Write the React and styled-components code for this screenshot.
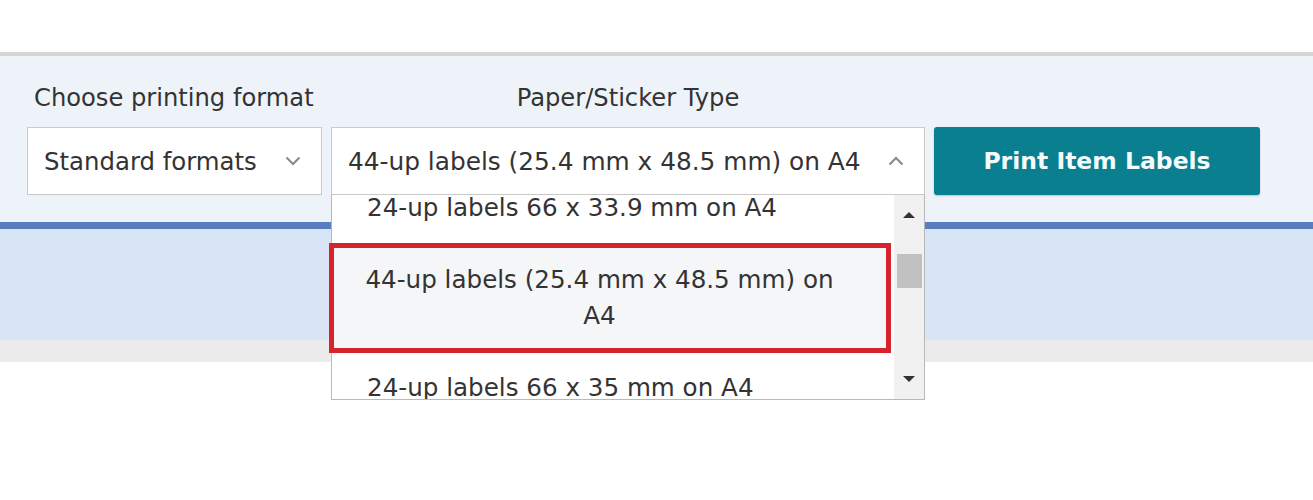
import React from "react";
import styled, { createGlobalStyle } from "styled-components";

const GlobalStyle = createGlobalStyle`
  body {
    margin: 0;
    background: #fff;
    font-family: "DejaVu Sans", Verdana, sans-serif;
    color: #333;
  }
`;

const options = [
  { id: 1, text: "24-up labels 66 x 33.9 mm on A4" },
  { id: 2, text: "44-up labels (25.4 mm x 48.5 mm) on A4", selected: true },
  { id: 3, text: "24-up labels 66 x 35 mm on A4" },
];

function Chevron({ up }) {
  return (
    <svg width="16" height="10" viewBox="0 0 16 10">
      <path
        d={up ? "M1.5 8.5 L8 2 L14.5 8.5" : "M1.5 1.5 L8 8 L14.5 1.5"}
        fill="none"
        stroke="#888"
        strokeWidth="2"
      />
    </svg>
  );
}

export default function App() {
  return (
    <>
      <GlobalStyle />
      <Page>
        <Toolbar>
          <Form>
            <Label>Choose printing format</Label>
            <Label $center>Paper/Sticker Type</Label>
            <Select>
              <span>Standard formats</span>
              <Chevron />
            </Select>
            <SelectWrap>
              <Select $wide>
                <span>44-up labels (25.4 mm x 48.5 mm) on A4</span>
                <Chevron up />
              </Select>
              <Dropdown>
                <OptionList>
                  <OptionInner>
                    {options.map((o) => (
                      <Option key={o.id} $selected={o.selected}>
                        {o.text}
                      </Option>
                    ))}
                  </OptionInner>
                </OptionList>
                <Scrollbar>
                  <ArrowUp />
                  <Track>
                    <Thumb />
                  </Track>
                  <ArrowDown />
                </Scrollbar>
              </Dropdown>
            </SelectWrap>
            <PrintButton>Print Item Labels</PrintButton>
          </Form>
        </Toolbar>
        <BlueBand />
        <GreyStrip />
      </Page>
    </>
  );
}

const Page = styled.div`
  padding-top: 52px;
  min-height: 500px;
  box-sizing: border-box;
`;

const Toolbar = styled.div`
  border-top: 4px solid #d6d6d6;
  border-bottom: 7px solid #5a7cc0;
  background: #eef3f9;
  height: 177px;
  box-sizing: border-box;
  padding: 28px 0 0 27px;
  position: relative;
  z-index: 1;
`;

const Form = styled.div`
  display: grid;
  grid-template-columns: 295px 594px 326px;
  column-gap: 9px;
  row-gap: 15px;
`;

const Label = styled.div`
  font-size: 24.2px;
  line-height: 28px;
  color: #333;
  padding-left: ${(p) => (p.$center ? "0" : "7px")};
  text-align: ${(p) => (p.$center ? "center" : "left")};
  grid-column: ${(p) => (p.$center ? "2" : "1")};
  grid-row: 1;
  white-space: nowrap;
`;

const Select = styled.div`
  height: 68px;
  box-sizing: border-box;
  border: 1px solid #c9c9c9;
  background: #fff;
  display: flex;
  align-items: center;
  justify-content: space-between;
  padding: 0 20px 0 16px;
  font-size: ${(p) => (p.$wide ? "24.8px" : "24.4px")};
  color: #333;
  grid-row: 2;
  white-space: nowrap;
`;

const SelectWrap = styled.div`
  position: relative;
  grid-row: 2;
`;

const Dropdown = styled.div`
  position: absolute;
  top: 68px;
  left: 0;
  width: 594px;
  height: 205px;
  box-sizing: border-box;
  border: 1px solid #b9b9b9;
  border-top: none;
  background: #fff;
  display: flex;
  z-index: 2;
`;

const OptionList = styled.div`
  flex: 1;
`;

const OptionInner = styled.div`
  height: 100%;
  overflow: hidden;
  margin-left: -3px;
  padding-left: 3px;
`;

const Option = styled.div`
  font-size: 24.6px;
  line-height: 36px;
  color: #333;
  padding: ${(p) => (p.$selected ? "14px 46px 14px 25px" : "17px 35px")};
  text-align: ${(p) => (p.$selected ? "center" : "left")};
  background: ${(p) => (p.$selected ? "#f4f6f8" : "#fff")};
  border: ${(p) => (p.$selected ? "5px solid #d7232b" : "none")};
  margin-left: ${(p) => (p.$selected ? "-3px" : "0")};
  margin-right: ${(p) => (p.$selected ? "3px" : "0")};
  white-space: ${(p) => (p.$selected ? "normal" : "nowrap")};
  &:first-child {
    margin-top: -22px;
  }
`;

const Scrollbar = styled.div`
  width: 30px;
  background: #f1f1f1;
  display: flex;
  flex-direction: column;
  align-items: center;
`;

const ArrowUp = styled.div`
  margin-top: 17px;
  width: 0;
  height: 0;
  border-left: 6px solid transparent;
  border-right: 6px solid transparent;
  border-bottom: 6px solid #333;
`;

const ArrowDown = styled.div`
  margin-bottom: 17px;
  width: 0;
  height: 0;
  border-left: 6px solid transparent;
  border-right: 6px solid transparent;
  border-top: 6px solid #333;
`;

const Track = styled.div`
  flex: 1;
  width: 100%;
  padding-top: 36px;
  box-sizing: border-box;
  display: flex;
  justify-content: center;
`;

const Thumb = styled.div`
  width: 25px;
  height: 34px;
  background: #c1c1c1;
`;

const PrintButton = styled.button`
  grid-row: 2;
  height: 68px;
  border: none;
  border-radius: 3px;
  background: #0a7f8f;
  color: #f4fbfc;
  font-family: "DejaVu Sans", Verdana, sans-serif;
  font-size: 23.5px;
  font-weight: 700;
  box-shadow: 0 1px 2px rgba(0, 0, 0, 0.2);
  cursor: pointer;
`;

const BlueBand = styled.div`
  height: 111px;
  background: #d9e5f4;
`;

const GreyStrip = styled.div`
  height: 22px;
  background: #ebebeb;
`;
